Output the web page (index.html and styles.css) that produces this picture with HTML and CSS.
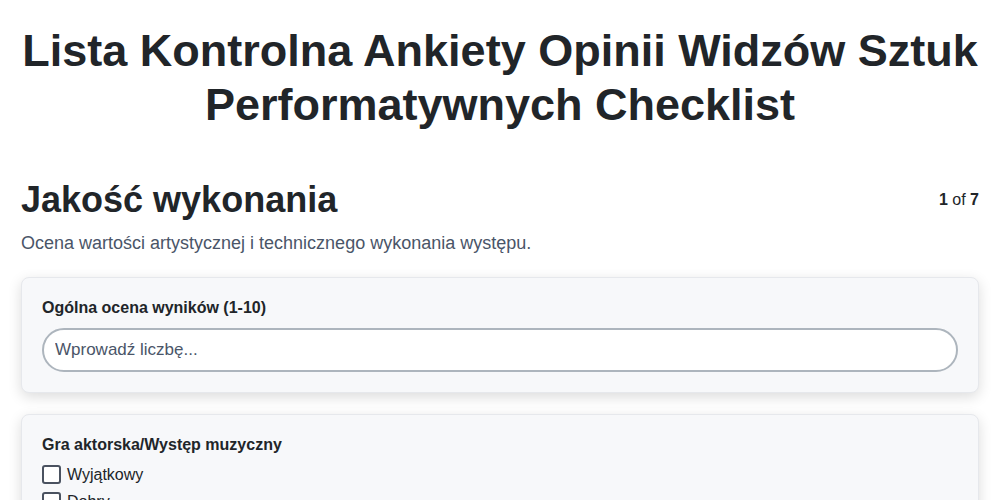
FILE: index.html
```html
<!DOCTYPE html>
<html lang="pl">
<head>
  <meta charset="UTF-8">
  <meta name="viewport" content="width=device-width, initial-scale=1.0">
  <title>Lista Kontrolna Ankiety Opinii Widzów</title>
  <link rel="stylesheet" href="styles.css">
</head>
<body>
  <div class="page">
    <h1 class="title">Lista Kontrolna Ankiety Opinii Widzów Sztuk Performatywnych Checklist</h1>

    <div class="section-head">
      <h2>Jakość wykonania</h2>
      <div class="step"><b>1</b> of <b>7</b></div>
    </div>
    <p class="section-desc">Ocena wartości artystycznej i technicznego wykonania występu.</p>

    <div class="card">
      <label class="field-label" for="ocena">Ogólna ocena wyników (1-10)</label>
      <input type="text" id="ocena" class="field-input" placeholder="Wprowadź liczbę...">
    </div>

    <div class="card">
      <div class="field-label">Gra aktorska/Występ muzyczny</div>
      <label class="check"><input type="checkbox"> Wyjątkowy</label>
      <label class="check"><input type="checkbox"> Dobry</label>
      <label class="check"><input type="checkbox"> Przeciętny</label>
      <label class="check"><input type="checkbox"> Słaby</label>
    </div>
  </div>
</body>
</html>
```

FILE: styles.css
```css
body {
  margin: 0;
  padding: 0;
  font-family: "Liberation Sans", Arial, sans-serif;
  background-color: #ffffff;
  color: #212529;
}

.page {
  padding: 20px 21px;
}

.title {
  text-align: center;
  font-size: 45px;
  line-height: 54px;
  margin: 4px 0 46px;
  color: #212529;
}

.section-head {
  display: flex;
  justify-content: space-between;
  align-items: center;
}

.section-head h2 {
  margin: 0;
  font-size: 36px;
  line-height: 44px;
}

.step {
  font-size: 16px;
  color: #212529;
}

.section-desc {
  margin: 11px 0 23px;
  font-size: 18px;
  color: #4a5568;
}

.card {
  background-color: #f7f8fa;
  border: 1px solid #e6e8ec;
  border-radius: 8px;
  box-shadow: 0 4px 14px rgba(0, 0, 0, 0.14);
  padding: 21px 20px 20px;
  margin-bottom: 21px;
}

.field-label {
  display: block;
  font-weight: bold;
  font-size: 16px;
  margin-bottom: 11px;
}

.field-input {
  display: block;
  box-sizing: border-box;
  width: 100%;
  height: 44px;
  padding: 0 11px;
  font-family: inherit;
  font-size: 17px;
  border: 2px solid #adb5bd;
  border-radius: 22px;
  background-color: #ffffff;
  color: #212529;
}

.field-input::placeholder {
  color: #4a5568;
}

.check {
  display: flex;
  align-items: center;
  gap: 6px;
  font-size: 16px;
  margin-bottom: 8px;
}

.check input {
  appearance: none;
  width: 19px;
  height: 19px;
  margin: 0;
  border: 2px solid #4a5260;
  border-radius: 3px;
  background: #ffffff;
}
```
